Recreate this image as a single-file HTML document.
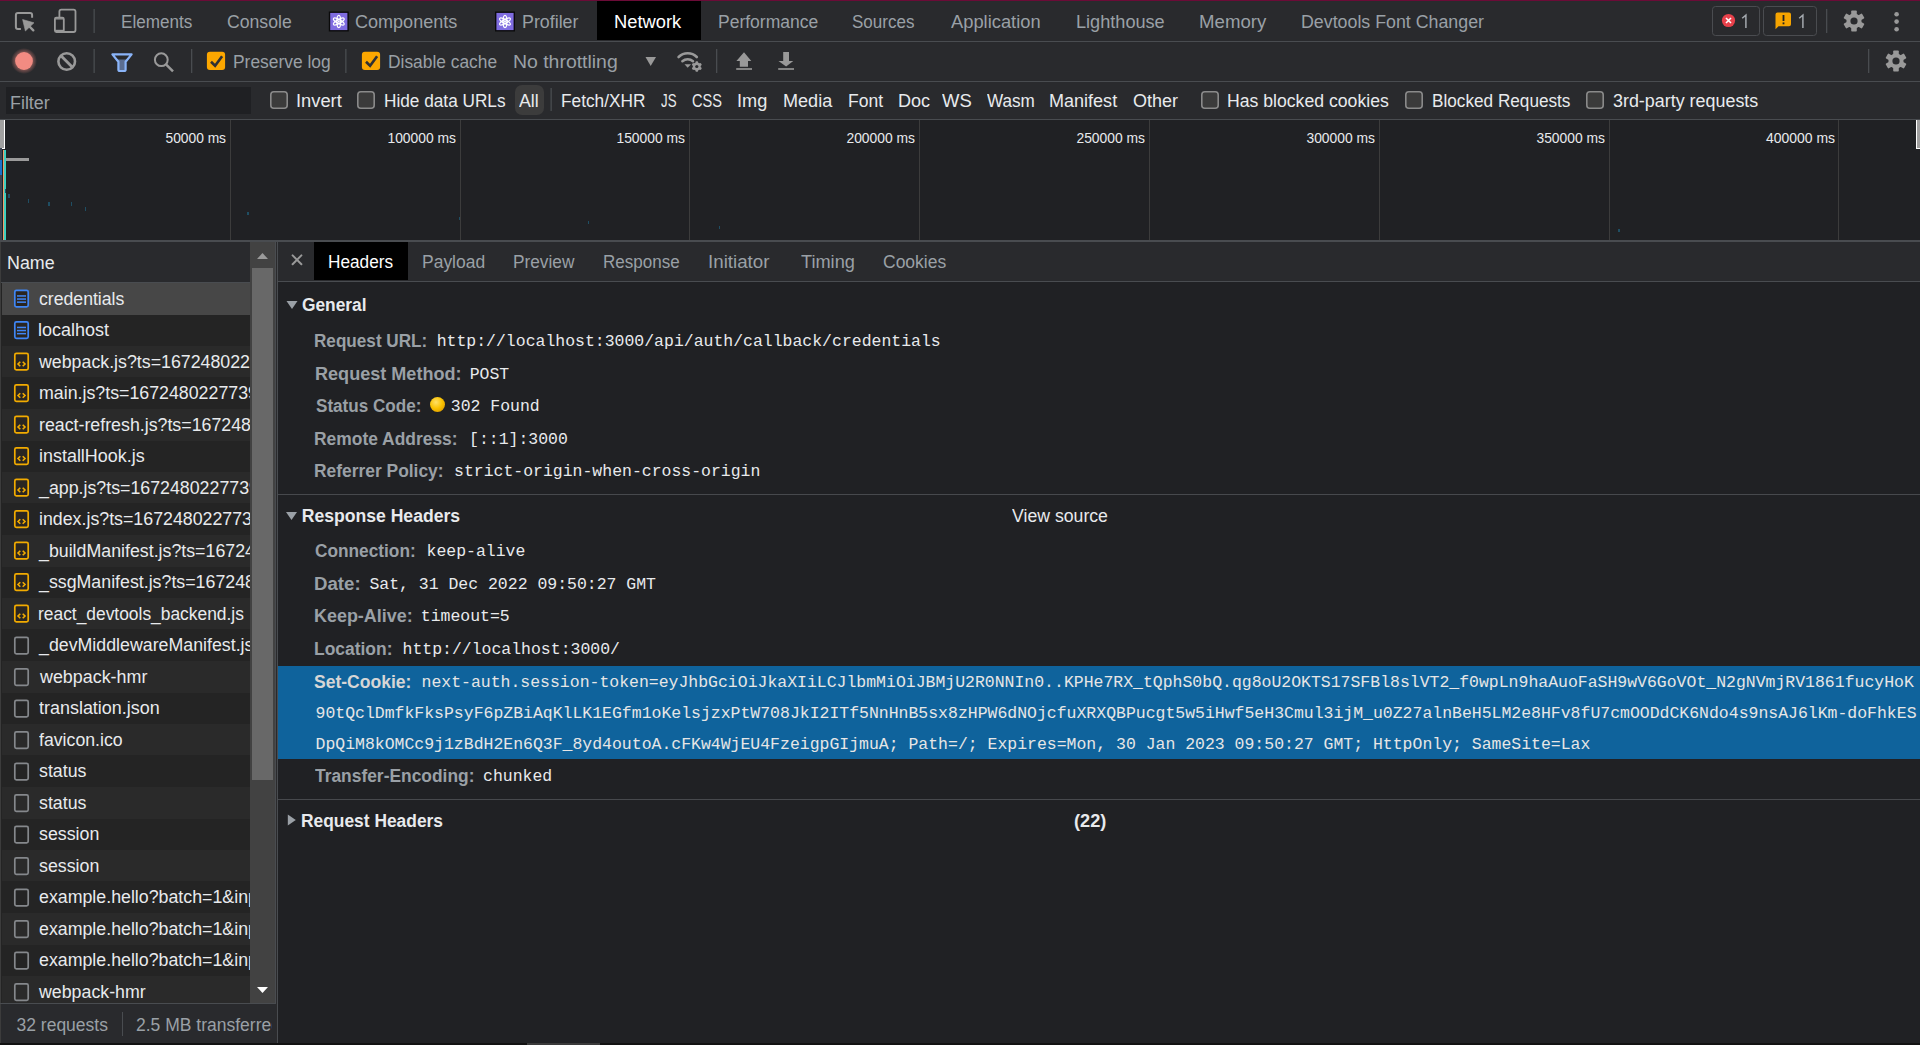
<!DOCTYPE html>
<html><head><meta charset="utf-8">
<style>
html,body{margin:0;padding:0;width:1920px;height:1045px;overflow:hidden;background:#202124;}
body{position:relative;font-family:"Liberation Sans",sans-serif;}
.a{position:absolute;}
.t{position:absolute;white-space:nowrap;line-height:1;}
.b{font-weight:700;}
.m{position:absolute;white-space:pre;line-height:1;font-family:"Liberation Mono",monospace;}
svg{position:absolute;left:0;top:0;overflow:visible;}
</style></head><body>
<div class="a" style="left:0px;top:0px;width:1920px;height:41px;background:#292a2d;"></div>
<div class="a" style="left:0px;top:0px;width:1920px;height:1px;background:#6b0b37;"></div>
<div class="a" style="left:0px;top:41px;width:1920px;height:1px;background:#494c50;"></div>
<div class="a" style="left:597px;top:1px;width:104px;height:39px;background:#000;"></div>
<div id="t_Elements_121_28" class="t" style="left:120.70px;top:14.19px;font-size:17.5px;color:#9aa0a6;transform:scaleX(0.9767);transform-origin:0 0;">Elements</div>
<div id="t_Console_227_28" class="t" style="left:226.50px;top:14.19px;font-size:17.5px;color:#9aa0a6;transform:scaleX(1.0083);transform-origin:0 0;">Console</div>
<div id="t_Components_356_28" class="t" style="left:355.00px;top:14.19px;font-size:17.5px;color:#9aa0a6;transform:scaleX(1.0306);transform-origin:0 0;">Components</div>
<div id="t_Profiler_523_28" class="t" style="left:522.00px;top:14.19px;font-size:17.5px;color:#9aa0a6;transform:scaleX(1.0188);transform-origin:0 0;">Profiler</div>
<div id="t_Performance_718_28" class="t" style="left:717.50px;top:14.19px;font-size:17.5px;color:#9aa0a6;transform:scaleX(1.0001);transform-origin:0 0;">Performance</div>
<div id="t_Sources_853_28" class="t" style="left:852.00px;top:14.19px;font-size:17.5px;color:#9aa0a6;transform:scaleX(0.9718);transform-origin:0 0;">Sources</div>
<div id="t_Application_951_28" class="t" style="left:951.00px;top:14.19px;font-size:17.5px;color:#9aa0a6;transform:scaleX(1.0471);transform-origin:0 0;">Application</div>
<div id="t_Lighthouse_1077_28" class="t" style="left:1076.00px;top:14.19px;font-size:17.5px;color:#9aa0a6;transform:scaleX(1.0357);transform-origin:0 0;">Lighthouse</div>
<div id="t_Memory_1200_28" class="t" style="left:1199.00px;top:14.19px;font-size:17.5px;color:#9aa0a6;transform:scaleX(1.0645);transform-origin:0 0;">Memory</div>
<div id="t_DevtoolsFontChan_1302_28" class="t" style="left:1301.00px;top:14.19px;font-size:17.5px;color:#9aa0a6;transform:scaleX(1.0168);transform-origin:0 0;">Devtools Font Changer</div>
<div id="t_Network_615_28" class="t" style="left:614.00px;top:14.19px;font-size:17.5px;color:#fff;transform:scaleX(1.0469);transform-origin:0 0;">Network</div>
<div class="a" style="left:0px;top:42px;width:1920px;height:39px;background:#292a2d;"></div>
<div class="a" style="left:0px;top:81px;width:1920px;height:1px;background:#494c50;"></div>
<div id="t_Preservelog_235_68" class="t" style="left:233.40px;top:54.19px;font-size:17.5px;color:#9aa0a6;transform:scaleX(0.9939);transform-origin:0 0;">Preserve log</div>
<div id="t_Disablecache_389_68" class="t" style="left:388.00px;top:54.19px;font-size:17.5px;color:#9aa0a6;transform:scaleX(0.9919);transform-origin:0 0;">Disable cache</div>
<div id="t_Nothrottling_514_68" class="t" style="left:513.00px;top:54.19px;font-size:17.5px;color:#9aa0a6;transform:scaleX(1.1099);transform-origin:0 0;">No throttling</div>
<div class="a" style="left:0px;top:82px;width:1920px;height:37px;background:#292a2d;"></div>
<div class="a" style="left:0px;top:119px;width:1920px;height:1px;background:#494c50;"></div>
<div class="a" style="left:6px;top:87px;width:245px;height:27px;background:#1f2023;"></div>
<div id="t_Filter_11_109" class="t" style="left:10.20px;top:95.19px;font-size:17.5px;color:#9aa0a6;transform:scaleX(1.0221);transform-origin:0 0;">Filter</div>
<div class="a" style="left:515px;top:85px;width:29px;height:30px;background:#3c3c3c;border-radius:7px;"></div>
<div id="t_Invert_297_107" class="t" style="left:296.00px;top:93.19px;font-size:17.5px;color:#e8eaed;transform:scaleX(1.0465);transform-origin:0 0;">Invert</div>
<div id="t_HidedataURLs_385_107" class="t" style="left:384.00px;top:93.19px;font-size:17.5px;color:#e8eaed;transform:scaleX(0.9840);transform-origin:0 0;">Hide data URLs</div>
<div id="t_All_519_107" class="t" style="left:519.30px;top:93.19px;font-size:17.5px;color:#e8eaed;transform:scaleX(1.0145);transform-origin:0 0;">All</div>
<div id="t_FetchXHR_562_107" class="t" style="left:561.00px;top:93.19px;font-size:17.5px;color:#e8eaed;transform:scaleX(0.9874);transform-origin:0 0;">Fetch/XHR</div>
<div id="t_JS_661_107" class="t" style="left:661.00px;top:93.19px;font-size:17.5px;color:#e8eaed;transform:scaleX(0.7591);transform-origin:0 0;">JS</div>
<div id="t_CSS_692_107" class="t" style="left:692.00px;top:93.19px;font-size:17.5px;color:#e8eaed;transform:scaleX(0.8333);transform-origin:0 0;">CSS</div>
<div id="t_Img_738_107" class="t" style="left:737.00px;top:93.19px;font-size:17.5px;color:#e8eaed;transform:scaleX(1.0357);transform-origin:0 0;">Img</div>
<div id="t_Media_784_107" class="t" style="left:783.00px;top:93.19px;font-size:17.5px;color:#e8eaed;transform:scaleX(1.0326);transform-origin:0 0;">Media</div>
<div id="t_Font_848_107" class="t" style="left:848.00px;top:93.19px;font-size:17.5px;color:#e8eaed;">Font</div>
<div id="t_Doc_899_107" class="t" style="left:898.00px;top:93.19px;font-size:17.5px;color:#e8eaed;transform:scaleX(1.0333);transform-origin:0 0;">Doc</div>
<div id="t_WS_942_107" class="t" style="left:942.00px;top:93.19px;font-size:17.5px;color:#e8eaed;transform:scaleX(1.0554);transform-origin:0 0;">WS</div>
<div id="t_Wasm_986_107" class="t" style="left:986.80px;top:93.19px;font-size:17.5px;color:#e8eaed;transform:scaleX(0.9781);transform-origin:0 0;">Wasm</div>
<div id="t_Manifest_1050_107" class="t" style="left:1049.00px;top:93.19px;font-size:17.5px;color:#e8eaed;transform:scaleX(1.0303);transform-origin:0 0;">Manifest</div>
<div id="t_Other_1133_107" class="t" style="left:1133.00px;top:93.19px;font-size:17.5px;color:#e8eaed;transform:scaleX(1.0290);transform-origin:0 0;">Other</div>
<div id="t_Hasblockedcookie_1228_107" class="t" style="left:1227.45px;top:93.19px;font-size:17.5px;color:#e8eaed;transform:scaleX(1.0079);transform-origin:0 0;">Has blocked cookies</div>
<div id="t_BlockedRequests_1433_107" class="t" style="left:1432.00px;top:93.19px;font-size:17.5px;color:#e8eaed;transform:scaleX(0.9815);transform-origin:0 0;">Blocked Requests</div>
<div id="t_3rdpartyrequests_1613_107" class="t" style="left:1613.45px;top:93.19px;font-size:17.5px;color:#e8eaed;transform:scaleX(1.0229);transform-origin:0 0;">3rd-party requests</div>
<div class="a" style="left:0px;top:120px;width:1920px;height:120px;background:#202124;"></div>
<div class="a" style="left:0px;top:240px;width:1920px;height:2px;background:#494c50;"></div>
<div class="a" style="left:230px;top:120px;width:1px;height:120px;background:#3c3c3c;"></div>
<div id="ov0" class="t" style="left:-74.20px;top:130.58px;font-size:14.2px;color:#e8eaed;transform:scaleX(0.9712);transform-origin:100% 0;width:300px;text-align:right;">50000 ms</div>
<div class="a" style="left:460px;top:120px;width:1px;height:120px;background:#3c3c3c;"></div>
<div id="ov1" class="t" style="left:156.10px;top:130.58px;font-size:14.2px;color:#e8eaed;transform:scaleX(0.9768);transform-origin:100% 0;width:300px;text-align:right;">100000 ms</div>
<div class="a" style="left:689px;top:120px;width:1px;height:120px;background:#3c3c3c;"></div>
<div id="ov2" class="t" style="left:385.10px;top:130.58px;font-size:14.2px;color:#e8eaed;transform:scaleX(0.9768);transform-origin:100% 0;width:300px;text-align:right;">150000 ms</div>
<div class="a" style="left:919px;top:120px;width:1px;height:120px;background:#3c3c3c;"></div>
<div id="ov3" class="t" style="left:615.10px;top:130.58px;font-size:14.2px;color:#e8eaed;transform:scaleX(0.9768);transform-origin:100% 0;width:300px;text-align:right;">200000 ms</div>
<div class="a" style="left:1149px;top:120px;width:1px;height:120px;background:#3c3c3c;"></div>
<div id="ov4" class="t" style="left:845.10px;top:130.58px;font-size:14.2px;color:#e8eaed;transform:scaleX(0.9768);transform-origin:100% 0;width:300px;text-align:right;">250000 ms</div>
<div class="a" style="left:1379px;top:120px;width:1px;height:120px;background:#3c3c3c;"></div>
<div id="ov5" class="t" style="left:1075.10px;top:130.58px;font-size:14.2px;color:#e8eaed;transform:scaleX(0.9768);transform-origin:100% 0;width:300px;text-align:right;">300000 ms</div>
<div class="a" style="left:1609px;top:120px;width:1px;height:120px;background:#3c3c3c;"></div>
<div id="ov6" class="t" style="left:1305.10px;top:130.58px;font-size:14.2px;color:#e8eaed;transform:scaleX(0.9768);transform-origin:100% 0;width:300px;text-align:right;">350000 ms</div>
<div class="a" style="left:1838px;top:120px;width:1px;height:120px;background:#3c3c3c;"></div>
<div id="ov7" class="t" style="left:1535.00px;top:130.58px;font-size:14.2px;color:#e8eaed;transform:scaleX(0.9833);transform-origin:100% 0;width:300px;text-align:right;">400000 ms</div>
<div class="a" style="left:0px;top:120px;width:4px;height:28px;background:#a0a0a0;border-right:1px solid #fff;border-bottom:1px solid #fff;"></div>
<div class="a" style="left:1916px;top:120px;width:4px;height:28px;background:#a0a0a0;border-left:1px solid #fff;border-bottom:1px solid #fff;"></div>
<div class="a" style="left:0px;top:148px;width:2px;height:92px;background:#3b4352;"></div>
<div class="a" style="left:0px;top:160px;width:2px;height:15px;background:#1a73c9;"></div>
<div class="a" style="left:3px;top:150px;width:1px;height:90px;background:#f29b6c;"></div>
<div class="a" style="left:4px;top:150px;width:2px;height:90px;background:#3ccfc0;"></div>
<div class="a" style="left:6px;top:158px;width:23px;height:3px;background:#9a9a9a;"></div>
<div class="a" style="left:5px;top:189px;width:1px;height:4px;background:#1f4e63;"></div>
<div class="a" style="left:8px;top:194px;width:2px;height:4px;background:#1f4e63;"></div>
<div class="a" style="left:28px;top:199px;width:1px;height:4px;background:#1f4e63;"></div>
<div class="a" style="left:48px;top:202px;width:2px;height:4px;background:#1f4e63;"></div>
<div class="a" style="left:71px;top:202px;width:1px;height:4px;background:#1f4e63;"></div>
<div class="a" style="left:85px;top:207px;width:1px;height:4px;background:#1f4e63;"></div>
<div class="a" style="left:247px;top:212px;width:2px;height:3px;background:#1f4e63;"></div>
<div class="a" style="left:459px;top:217px;width:1px;height:3px;background:#1f4e63;"></div>
<div class="a" style="left:588px;top:221px;width:1px;height:3px;background:#1f4e63;"></div>
<div class="a" style="left:719px;top:226px;width:1px;height:3px;background:#1f4e63;"></div>
<div class="a" style="left:1618px;top:229px;width:2px;height:3px;background:#1f4e63;"></div>
<div class="a" style="left:0px;top:242px;width:276px;height:801px;background:#242424;"></div>
<div class="a" style="left:0px;top:242px;width:275px;height:40px;background:#292a2d;"></div>
<div class="a" style="left:0px;top:282px;width:275px;height:1px;background:#494c50;"></div>
<div id="t_Name_8_269" class="t" style="left:7.20px;top:255.19px;font-size:17.5px;color:#e8eaed;transform:scaleX(1.0202);transform-origin:0 0;">Name</div>
<div class="a" style="left:0;top:283px;width:250px;height:720px;overflow:hidden;">
<div class="a" style="left:2px;top:0px;width:248px;height:32px;background:#474747;"></div>
<div id="row0" class="t" style="left:39.20px;top:7.79px;font-size:17.5px;color:#e8eaed;transform:scaleX(1.0084);transform-origin:0 0;">credentials</div>
<div class="a" style="left:2px;top:32px;width:248px;height:31px;background:#242424;"></div>
<div id="row1" class="t" style="left:38.20px;top:39.29px;font-size:17.5px;color:#e8eaed;transform:scaleX(1.0278);transform-origin:0 0;">localhost</div>
<div class="a" style="left:2px;top:63px;width:248px;height:31px;background:#2a2a2a;"></div>
<div id="row2" class="t" style="left:39.34px;top:70.79px;font-size:17.5px;color:#e8eaed;transform:scaleX(1.0158);transform-origin:0 0;">webpack.js?ts=167248022…</div>
<div class="a" style="left:2px;top:94px;width:248px;height:32px;background:#242424;"></div>
<div id="row3" class="t" style="left:39.34px;top:102.29px;font-size:17.5px;color:#e8eaed;transform:scaleX(1.0158);transform-origin:0 0;">main.js?ts=1672480227739</div>
<div class="a" style="left:2px;top:126px;width:248px;height:32px;background:#2a2a2a;"></div>
<div id="row4" class="t" style="left:39.34px;top:133.79px;font-size:17.5px;color:#e8eaed;transform:scaleX(1.0158);transform-origin:0 0;">react-refresh.js?ts=1672480227739</div>
<div class="a" style="left:2px;top:158px;width:248px;height:31px;background:#242424;"></div>
<div id="row5" class="t" style="left:38.60px;top:165.29px;font-size:17.5px;color:#e8eaed;transform:scaleX(1.0247);transform-origin:0 0;">installHook.js</div>
<div class="a" style="left:2px;top:189px;width:248px;height:31px;background:#2a2a2a;"></div>
<div id="row6" class="t" style="left:39.34px;top:196.79px;font-size:17.5px;color:#e8eaed;transform:scaleX(1.0158);transform-origin:0 0;">_app.js?ts=1672480227739</div>
<div class="a" style="left:2px;top:220px;width:248px;height:32px;background:#242424;"></div>
<div id="row7" class="t" style="left:39.34px;top:228.29px;font-size:17.5px;color:#e8eaed;transform:scaleX(1.0158);transform-origin:0 0;">index.js?ts=1672480227739</div>
<div class="a" style="left:2px;top:252px;width:248px;height:32px;background:#2a2a2a;"></div>
<div id="row8" class="t" style="left:39.34px;top:259.79px;font-size:17.5px;color:#e8eaed;transform:scaleX(1.0158);transform-origin:0 0;">_buildManifest.js?ts=1672480227739</div>
<div class="a" style="left:2px;top:284px;width:248px;height:31px;background:#242424;"></div>
<div id="row9" class="t" style="left:39.34px;top:291.29px;font-size:17.5px;color:#e8eaed;transform:scaleX(1.0158);transform-origin:0 0;">_ssgManifest.js?ts=1672480227739</div>
<div class="a" style="left:2px;top:315px;width:248px;height:31px;background:#2a2a2a;"></div>
<div id="row10" class="t" style="left:37.90px;top:322.79px;font-size:17.5px;color:#e8eaed;transform:scaleX(0.9937);transform-origin:0 0;">react_devtools_backend.js</div>
<div class="a" style="left:2px;top:346px;width:248px;height:32px;background:#242424;"></div>
<div id="row11" class="t" style="left:39.34px;top:354.29px;font-size:17.5px;color:#e8eaed;transform:scaleX(1.0158);transform-origin:0 0;">_devMiddlewareManifest.json</div>
<div class="a" style="left:2px;top:378px;width:248px;height:32px;background:#2a2a2a;"></div>
<div id="row12" class="t" style="left:39.90px;top:385.79px;font-size:17.5px;color:#e8eaed;transform:scaleX(1.0219);transform-origin:0 0;">webpack-hmr</div>
<div class="a" style="left:2px;top:410px;width:248px;height:31px;background:#242424;"></div>
<div id="row13" class="t" style="left:38.90px;top:417.29px;font-size:17.5px;color:#e8eaed;transform:scaleX(1.0256);transform-origin:0 0;">translation.json</div>
<div class="a" style="left:2px;top:441px;width:248px;height:31px;background:#2a2a2a;"></div>
<div id="row14" class="t" style="left:38.90px;top:448.79px;font-size:17.5px;color:#e8eaed;transform:scaleX(1.0110);transform-origin:0 0;">favicon.ico</div>
<div class="a" style="left:2px;top:472px;width:248px;height:32px;background:#242424;"></div>
<div id="row15" class="t" style="left:39.34px;top:480.29px;font-size:17.5px;color:#e8eaed;transform:scaleX(1.0158);transform-origin:0 0;">status</div>
<div class="a" style="left:2px;top:504px;width:248px;height:32px;background:#2a2a2a;"></div>
<div id="row16" class="t" style="left:39.34px;top:511.79px;font-size:17.5px;color:#e8eaed;transform:scaleX(1.0158);transform-origin:0 0;">status</div>
<div class="a" style="left:2px;top:536px;width:248px;height:31px;background:#242424;"></div>
<div id="row17" class="t" style="left:39.34px;top:543.29px;font-size:17.5px;color:#e8eaed;transform:scaleX(1.0158);transform-origin:0 0;">session</div>
<div class="a" style="left:2px;top:567px;width:248px;height:31px;background:#2a2a2a;"></div>
<div id="row18" class="t" style="left:39.34px;top:574.79px;font-size:17.5px;color:#e8eaed;transform:scaleX(1.0158);transform-origin:0 0;">session</div>
<div class="a" style="left:2px;top:598px;width:248px;height:32px;background:#242424;"></div>
<div id="row19" class="t" style="left:39.34px;top:606.29px;font-size:17.5px;color:#e8eaed;transform:scaleX(1.0158);transform-origin:0 0;">example.hello?batch=1&amp;input=%7B%7D</div>
<div class="a" style="left:2px;top:630px;width:248px;height:32px;background:#2a2a2a;"></div>
<div id="row20" class="t" style="left:39.34px;top:637.79px;font-size:17.5px;color:#e8eaed;transform:scaleX(1.0158);transform-origin:0 0;">example.hello?batch=1&amp;input=%7B%7D</div>
<div class="a" style="left:2px;top:662px;width:248px;height:31px;background:#242424;"></div>
<div id="row21" class="t" style="left:39.34px;top:669.29px;font-size:17.5px;color:#e8eaed;transform:scaleX(1.0158);transform-origin:0 0;">example.hello?batch=1&amp;input=%7B%7D</div>
<div class="a" style="left:2px;top:693px;width:248px;height:31px;background:#2a2a2a;"></div>
<div id="row22" class="t" style="left:39.34px;top:700.79px;font-size:17.5px;color:#e8eaed;transform:scaleX(1.0158);transform-origin:0 0;">webpack-hmr</div>
</div>
<div class="a" style="left:250px;top:242px;width:25px;height:761px;background:#424242;"></div>
<div class="a" style="left:252px;top:268px;width:21px;height:512px;background:#686868;"></div>
<div class="a" style="left:0px;top:242px;width:1px;height:801px;background:#3c3c3c;"></div>
<div class="a" style="left:275px;top:242px;width:1px;height:801px;background:#494c50;"></div>
<div class="a" style="left:276px;top:242px;width:1px;height:801px;background:#2a2a2c;"></div>
<div class="a" style="left:277px;top:242px;width:1px;height:801px;background:#494c50;"></div>
<div class="a" style="left:0px;top:1003px;width:276px;height:1px;background:#494c50;"></div>
<div class="a" style="left:1px;top:1004px;width:275px;height:39px;background:#292a2d;"></div>
<div id="t_32requests_16_1031" class="t" style="left:16.50px;top:1017.19px;font-size:17.5px;color:#9aa0a6;">32 requests</div>
<div class="a" style="left:122px;top:1012px;width:1px;height:24px;background:#494c50;"></div>
<div class="a" style="left:130px;top:1004px;width:142px;height:39px;overflow:hidden;"><div id="mbt" class="t" style="left:6.00px;top:13.19px;font-size:17.5px;color:#9aa0a6;">2.5 MB transferred</div>
</div>
<div class="a" style="left:0px;top:1043px;width:1920px;height:2px;background:#121212;"></div>
<div class="a" style="left:527px;top:1043px;width:73px;height:2px;background:#3a3a3a;"></div>
<div class="a" style="left:278px;top:242px;width:1642px;height:801px;background:#202124;"></div>
<div class="a" style="left:278px;top:242px;width:1642px;height:39px;background:#292a2d;"></div>
<div class="a" style="left:278px;top:281px;width:1642px;height:1px;background:#494c50;"></div>
<div class="a" style="left:314px;top:242px;width:94px;height:38px;background:#000;"></div>
<div id="t_Headers_329_268" class="t" style="left:328.00px;top:254.19px;font-size:17.5px;color:#fff;transform:scaleX(0.9846);transform-origin:0 0;">Headers</div>
<div id="t_Payload_422_268" class="t" style="left:421.80px;top:254.19px;font-size:17.5px;color:#9aa0a6;transform:scaleX(0.9987);transform-origin:0 0;">Payload</div>
<div id="t_Preview_514_268" class="t" style="left:513.20px;top:254.19px;font-size:17.5px;color:#9aa0a6;transform:scaleX(0.9859);transform-origin:0 0;">Preview</div>
<div id="t_Response_604_268" class="t" style="left:603.00px;top:254.19px;font-size:17.5px;color:#9aa0a6;transform:scaleX(0.9730);transform-origin:0 0;">Response</div>
<div id="t_Initiator_709_268" class="t" style="left:708.00px;top:254.19px;font-size:17.5px;color:#9aa0a6;transform:scaleX(1.0717);transform-origin:0 0;">Initiator</div>
<div id="t_Timing_801_268" class="t" style="left:801.00px;top:254.19px;font-size:17.5px;color:#9aa0a6;transform:scaleX(1.0392);transform-origin:0 0;">Timing</div>
<div id="t_Cookies_884_268" class="t" style="left:883.00px;top:254.19px;font-size:17.5px;color:#9aa0a6;">Cookies</div>
<div id="t_General_302_311" class="t b" style="left:302.00px;top:296.80px;font-size:17.6px;color:#e8eaed;transform:scaleX(0.9851);transform-origin:0 0;">General</div>
<div id="t_RequestURL_315_347" class="t b" style="left:314.40px;top:332.80px;font-size:17.6px;color:#9aa0a6;transform:scaleX(0.9737);transform-origin:0 0;">Request URL:</div>
<div id="t_httplocalhost300_436_347" class="m" style="left:436.70px;top:333.97px;font-size:16.48px;color:#e8eaed;">http://localhost:3000/api/auth/callback/credentials</div>
<div id="t_RequestMethod_315_380" class="t b" style="left:314.50px;top:365.80px;font-size:17.6px;color:#9aa0a6;transform:scaleX(1.0270);transform-origin:0 0;">Request Method:</div>
<div id="t_POST_469_380" class="m" style="left:469.70px;top:366.97px;font-size:16.48px;color:#e8eaed;">POST</div>
<div id="t_StatusCode_315_412" class="t b" style="left:315.50px;top:397.80px;font-size:17.6px;color:#9aa0a6;transform:scaleX(0.9720);transform-origin:0 0;">Status Code:</div>
<div id="t_302Found_450_412" class="m" style="left:450.80px;top:398.97px;font-size:16.48px;color:#e8eaed;">302 Found</div>
<div id="t_RemoteAddress_315_445" class="t b" style="left:314.00px;top:430.80px;font-size:17.6px;color:#9aa0a6;transform:scaleX(0.9900);transform-origin:0 0;">Remote Address:</div>
<div id="t_13000_469_445" class="m" style="left:469.00px;top:431.97px;font-size:16.48px;color:#e8eaed;">[::1]:3000</div>
<div id="t_ReferrerPolicy_315_477" class="t b" style="left:314.00px;top:462.80px;font-size:17.6px;color:#9aa0a6;transform:scaleX(0.9889);transform-origin:0 0;">Referrer Policy:</div>
<div id="t_strictoriginwhen_454_477" class="m" style="left:454.00px;top:463.97px;font-size:16.48px;color:#e8eaed;">strict-origin-when-cross-origin</div>
<div class="a" style="left:278px;top:494px;width:1642px;height:1px;background:#47494d;"></div>
<div id="t_ResponseHeaders_301_522" class="t b" style="left:301.70px;top:507.80px;font-size:17.6px;color:#e8eaed;">Response Headers</div>
<div id="t_Viewsource_1011_522" class="t" style="left:1011.80px;top:508.19px;font-size:17.5px;color:#e8eaed;transform:scaleX(1.0097);transform-origin:0 0;">View source</div>
<div id="t_Connection_315_557" class="t b" style="left:315.30px;top:543.30px;font-size:17.6px;color:#9aa0a6;transform:scaleX(0.9814);transform-origin:0 0;">Connection:</div>
<div id="t_keepalive_426_557" class="m" style="left:426.50px;top:544.47px;font-size:16.48px;color:#e8eaed;">keep-alive</div>
<div id="t_Date_315_590" class="t b" style="left:314.30px;top:575.80px;font-size:17.6px;color:#9aa0a6;transform:scaleX(1.0596);transform-origin:0 0;">Date:</div>
<div id="t_Sat31Dec20220950_369_590" class="m" style="left:369.40px;top:576.97px;font-size:16.48px;color:#e8eaed;">Sat, 31 Dec 2022 09:50:27 GMT</div>
<div id="t_KeepAlive_315_622" class="t b" style="left:314.30px;top:608.30px;font-size:17.6px;color:#9aa0a6;transform:scaleX(1.0194);transform-origin:0 0;">Keep-Alive:</div>
<div id="t_timeout5_420_622" class="m" style="left:420.80px;top:609.47px;font-size:16.48px;color:#e8eaed;">timeout=5</div>
<div id="t_Location_315_655" class="t b" style="left:314.30px;top:640.80px;font-size:17.6px;color:#9aa0a6;transform:scaleX(0.9913);transform-origin:0 0;">Location:</div>
<div id="t_httplocalhost300_402_655" class="m" style="left:402.50px;top:641.97px;font-size:16.48px;color:#e8eaed;">http://localhost:3000/</div>
<div class="a" style="left:278px;top:666px;width:1642px;height:93px;background:#0f639c;"></div>
<div id="t_SetCookie_315_688" class="t b" style="left:314.30px;top:673.80px;font-size:17.6px;color:#d6d6d6;transform:scaleX(0.9966);transform-origin:0 0;">Set-Cookie:</div>
<div id="t_nextauthsessiont_421_688" class="m" style="left:421.50px;top:674.97px;font-size:16.48px;color:#e6e6e6;">next-auth.session-token=eyJhbGciOiJkaXIiLCJlbmMiOiJBMjU2R0NNIn0..KPHe7RX_tQphS0bQ.qg8oU2OKTS17SFBl8slVT2_f0wpLn9haAuoFaSH9wV6GoVOt_N2gNVmjRV1861fucyHoK</div>
<div id="t_90tQclDmfkFksPsy_315_719" class="m" style="left:315.50px;top:705.97px;font-size:16.48px;color:#e6e6e6;">90tQclDmfkFksPsyF6pZBiAqKlLK1EGfm1oKelsjzxPtW708JkI2ITf5NnHnB5sx8zHPW6dNOjcfuXRXQBPucgt5w5iHwf5eH3Cmul3ijM_u0Z27alnBeH5LM2e8HFv8fU7cmOODdCK6Ndo4s9nsAJ6lKm-doFhkES</div>
<div id="t_DpQiM8kOMCc9j1zB_315_750" class="m" style="left:315.50px;top:736.97px;font-size:16.48px;color:#e6e6e6;">DpQiM8kOMCc9j1zBdH2En6Q3F_8yd4outoA.cFKw4WjEU4FzeigpGIjmuA; Path=/; Expires=Mon, 30 Jan 2023 09:50:27 GMT; HttpOnly; SameSite=Lax</div>
<div id="t_TransferEncoding_315_782" class="t b" style="left:314.50px;top:767.80px;font-size:17.6px;color:#9aa0a6;transform:scaleX(0.9885);transform-origin:0 0;">Transfer-Encoding:</div>
<div id="t_chunked_483_782" class="m" style="left:483.00px;top:768.97px;font-size:16.48px;color:#e8eaed;">chunked</div>
<div class="a" style="left:278px;top:799px;width:1642px;height:1px;background:#47494d;"></div>
<div id="t_RequestHeaders_301_827" class="t b" style="left:300.50px;top:812.80px;font-size:17.6px;color:#e8eaed;transform:scaleX(0.9879);transform-origin:0 0;">Request Headers</div>
<div id="t_22_1073_827" class="t b" style="left:1074.30px;top:812.80px;font-size:17.6px;color:#e8eaed;transform:scaleX(1.0343);transform-origin:0 0;">(22)</div>
<svg width="1920" height="1045" viewBox="0 0 1920 1045">
<path d="M20.9,29 H17.9 Q15.9,29 15.9,27 V14.9 Q15.9,12.9 17.9,12.9 H30.1 Q32.1,12.9 32.1,14.9 V17.8" fill="none" stroke="#999999" stroke-width="2"/>
<path d="M22.6,19.5 L34,22.8 L25.4,31 Z" fill="#999999" stroke="#999999" stroke-width="0.6" stroke-linejoin="round"/>
<path d="M28.5,25.5 L33.3,30.3" stroke="#999999" stroke-width="2.4" stroke-linecap="round"/>
<rect x="59.4" y="9.6" width="16.1" height="22.4" rx="2" fill="none" stroke="#999999" stroke-width="1.8"/>
<rect x="54.9" y="17.6" width="8.9" height="14.4" rx="1.5" fill="#292a2d" stroke="#999999" stroke-width="1.8"/>
<rect x="55" y="18.2" width="8.7" height="1.3" fill="#999999"/><rect x="55" y="29.8" width="8.7" height="1.6" fill="#999999"/>
<rect x="93.5" y="9" width="1.3" height="24" fill="#494c50"/>
<rect x="328.8" y="11.5" width="20" height="20" fill="#0a0a0a"/><rect x="330.2" y="12.9" width="17.2" height="17.2" fill="#7f6ce0"/><ellipse cx="338.8" cy="21.5" rx="1.9" ry="6.1" fill="none" stroke="#fff" stroke-width="1.25" transform="rotate(0 338.8 21.5)"/><ellipse cx="338.8" cy="21.5" rx="1.9" ry="6.1" fill="none" stroke="#fff" stroke-width="1.25" transform="rotate(60 338.8 21.5)"/><ellipse cx="338.8" cy="21.5" rx="1.9" ry="6.1" fill="none" stroke="#fff" stroke-width="1.25" transform="rotate(120 338.8 21.5)"/><circle cx="338.8" cy="21.5" r="1.0" fill="#fff"/>
<rect x="495" y="11.5" width="20" height="20" fill="#0a0a0a"/><rect x="496.4" y="12.9" width="17.2" height="17.2" fill="#7f6ce0"/><ellipse cx="505" cy="21.5" rx="1.9" ry="6.1" fill="none" stroke="#fff" stroke-width="1.25" transform="rotate(0 505 21.5)"/><ellipse cx="505" cy="21.5" rx="1.9" ry="6.1" fill="none" stroke="#fff" stroke-width="1.25" transform="rotate(60 505 21.5)"/><ellipse cx="505" cy="21.5" rx="1.9" ry="6.1" fill="none" stroke="#fff" stroke-width="1.25" transform="rotate(120 505 21.5)"/><circle cx="505" cy="21.5" r="1.0" fill="#fff"/>
<rect x="1712.5" y="6.5" width="47" height="29" rx="3" fill="none" stroke="#4a4c50" stroke-width="1"/>
<rect x="1763.5" y="6.5" width="53" height="29" rx="3" fill="none" stroke="#4a4c50" stroke-width="1"/>
<circle cx="1728.5" cy="20.5" r="6.6" fill="#e8414b"/>
<path d="M1726,18 L1731,23 M1731,18 L1726,23" stroke="#fff" stroke-width="1.6"/>
<path d="M1775.5,14.5 Q1775.5,12.5 1777.5,12.5 H1789 Q1791,12.5 1791,14.5 V24.2 Q1791,26.2 1789,26.2 H1778.5 L1775.5,29.3 Z" fill="#f6a400"/>
<rect x="1782.6" y="15" width="1.8" height="6" fill="#222"/><rect x="1782.6" y="22.4" width="1.8" height="1.9" fill="#222"/>
<path d="M1742.2,18.3 L1745.9,15.1 V28" fill="none" stroke="#a3a8ae" stroke-width="1.5"/>
<path d="M1799.2,18.3 L1802.9,15.1 V28" fill="none" stroke="#a3a8ae" stroke-width="1.5"/>
<rect x="1826" y="9" width="1.3" height="24" fill="#494c50"/>
<circle cx="1854" cy="21" r="7.6" fill="#999999"/><rect x="1851.2" y="10.4" width="5.6" height="21.2" rx="0.8" fill="#999999" transform="rotate(0 1854 21)"/><rect x="1851.2" y="10.4" width="5.6" height="21.2" rx="0.8" fill="#999999" transform="rotate(60 1854 21)"/><rect x="1851.2" y="10.4" width="5.6" height="21.2" rx="0.8" fill="#999999" transform="rotate(120 1854 21)"/><circle cx="1854" cy="21" r="3.6" fill="#292a2d"/>
<circle cx="1896.6" cy="14.2" r="2.3" fill="#999999"/>
<circle cx="1896.6" cy="21.6" r="2.3" fill="#999999"/>
<circle cx="1896.6" cy="29.2" r="2.3" fill="#999999"/>
<defs><radialGradient id="glow"><stop offset="0.6" stop-color="#f28b82" stop-opacity="0.5"/><stop offset="1" stop-color="#f28b82" stop-opacity="0"/></radialGradient><radialGradient id="yd" cx="0.4" cy="0.35" r="0.7"><stop offset="0" stop-color="#ffe066"/><stop offset="0.6" stop-color="#f9c200"/><stop offset="1" stop-color="#e0a000"/></radialGradient></defs>
<circle cx="24" cy="61" r="13" fill="url(#glow)"/>
<circle cx="24" cy="61" r="8.9" fill="#f28b82"/>
<circle cx="66.7" cy="61.5" r="8.3" fill="none" stroke="#999999" stroke-width="2.6"/>
<path d="M61.2,56 L72.2,67" stroke="#999999" stroke-width="2.8"/>
<rect x="93.5" y="49" width="1.3" height="24" fill="#494c50"/>
<path d="M115.6,59.6 H128.4 L125.6,62.6 V70 H118.4 V62.6 Z" fill="#5b6e92"/>
<path d="M112.4,54.4 H131.6 L125.6,61.8 V69.4 Q125.6,71 124,71 H120 Q118.4,71 118.4,69.4 V61.8 Z" fill="none" stroke="#8ab4f8" stroke-width="2.2" stroke-linejoin="round"/>
<circle cx="161.3" cy="59.7" r="6.4" fill="none" stroke="#999999" stroke-width="2"/>
<path d="M166,64.4 L173,71.4" stroke="#999999" stroke-width="2.4"/>
<rect x="191" y="49" width="1.3" height="24" fill="#494c50"/>
<rect x="206.9" y="51.7" width="18.2" height="18.4" rx="3" fill="#fca700"/><path d="M211.0,61.7 L215.1,65.7 L222.1,56.2" fill="none" stroke="#2f3033" stroke-width="2.6"/>
<rect x="345.2" y="49" width="1.3" height="24" fill="#494c50"/>
<rect x="361.9" y="51.7" width="18.2" height="18.4" rx="3" fill="#fca700"/><path d="M366.0,61.7 L370.09999999999997,65.7 L377.09999999999997,56.2" fill="none" stroke="#2f3033" stroke-width="2.6"/>
<path d="M645.5,57 H656 L650.7,66 Z" fill="#999999"/>
<path d="M678.6,57 A13,13 0 0 1 696.8,57" fill="none" stroke="#999999" stroke-width="2.6" stroke-linecap="round"/>
<path d="M682.4,61.2 A8,8 0 0 1 693,61.2" fill="none" stroke="#999999" stroke-width="2.6" stroke-linecap="round"/>
<path d="M684.5,64.3 L691,64.3 L687.7,67.8 Z" fill="#999999"/>
<circle cx="696.8" cy="66.5" r="3.9" fill="#999999"/><rect x="695.5" y="61.3" width="2.6" height="10.4" rx="0.8" fill="#999999" transform="rotate(0 696.8 66.5)"/><rect x="695.5" y="61.3" width="2.6" height="10.4" rx="0.8" fill="#999999" transform="rotate(60 696.8 66.5)"/><rect x="695.5" y="61.3" width="2.6" height="10.4" rx="0.8" fill="#999999" transform="rotate(120 696.8 66.5)"/><circle cx="696.8" cy="66.5" r="1.6" fill="#292a2d"/>
<rect x="716" y="49" width="1.3" height="24" fill="#494c50"/>
<path d="M744,52.2 L751.3,61 H748 V66.8 H739.8 V61 H736.4 Z" fill="#999999"/><rect x="736.2" y="68.2" width="15.8" height="1.6" fill="#999999"/>
<path d="M783.2,52 H789 V61 H793.3 L786.1,66.6 L778.5,61 H783.2 Z" fill="#999999"/><rect x="778.2" y="68.2" width="15.8" height="1.6" fill="#999999"/>
<rect x="1868" y="49" width="1.3" height="24" fill="#494c50"/>
<circle cx="1896" cy="61" r="7.6" fill="#999999"/><rect x="1893.2" y="50.4" width="5.6" height="21.2" rx="0.8" fill="#999999" transform="rotate(0 1896 61)"/><rect x="1893.2" y="50.4" width="5.6" height="21.2" rx="0.8" fill="#999999" transform="rotate(60 1896 61)"/><rect x="1893.2" y="50.4" width="5.6" height="21.2" rx="0.8" fill="#999999" transform="rotate(120 1896 61)"/><circle cx="1896" cy="61" r="3.6" fill="#292a2d"/>
<rect x="270.8" y="91.8" width="16.4" height="16.4" rx="3" fill="#3b3b3b" stroke="#8a8a8a" stroke-width="1.6"/>
<rect x="357.8" y="91.8" width="16.4" height="16.4" rx="3" fill="#3b3b3b" stroke="#8a8a8a" stroke-width="1.6"/>
<rect x="1201.8" y="91.8" width="16.4" height="16.4" rx="3" fill="#3b3b3b" stroke="#8a8a8a" stroke-width="1.6"/>
<rect x="1405.8" y="91.8" width="16.4" height="16.4" rx="3" fill="#3b3b3b" stroke="#8a8a8a" stroke-width="1.6"/>
<rect x="1586.8" y="91.8" width="16.4" height="16.4" rx="3" fill="#3b3b3b" stroke="#8a8a8a" stroke-width="1.6"/>
<rect x="550.5" y="88" width="1.3" height="23" fill="#494c50"/>
<rect x="14.8" y="290.30" width="13.4" height="16.6" rx="1.6" fill="#2a2520" stroke="#3f86f5" stroke-width="1.7"/>
<rect x="17" y="295.20" width="9" height="1.5" fill="#3f86f5"/>
<rect x="17" y="298.30" width="9" height="1.5" fill="#3f86f5"/>
<rect x="17" y="301.40" width="9" height="1.5" fill="#3f86f5"/>
<rect x="14.8" y="321.80" width="13.4" height="16.6" rx="1.6" fill="#2a2520" stroke="#3f86f5" stroke-width="1.7"/>
<rect x="17" y="326.70" width="9" height="1.5" fill="#3f86f5"/>
<rect x="17" y="329.80" width="9" height="1.5" fill="#3f86f5"/>
<rect x="17" y="332.90" width="9" height="1.5" fill="#3f86f5"/>
<rect x="14.8" y="353.30" width="13.4" height="16.6" rx="1.6" fill="#2a2622" stroke="#f2ab00" stroke-width="1.7"/>
<path d="M20.3,361.70 L18,364.00 L20.3,366.30 M22.7,361.70 L25,364.00 L22.7,366.30" fill="none" stroke="#f2ab00" stroke-width="1.6"/>
<rect x="14.8" y="384.80" width="13.4" height="16.6" rx="1.6" fill="#2a2622" stroke="#f2ab00" stroke-width="1.7"/>
<path d="M20.3,393.20 L18,395.50 L20.3,397.80 M22.7,393.20 L25,395.50 L22.7,397.80" fill="none" stroke="#f2ab00" stroke-width="1.6"/>
<rect x="14.8" y="416.30" width="13.4" height="16.6" rx="1.6" fill="#2a2622" stroke="#f2ab00" stroke-width="1.7"/>
<path d="M20.3,424.70 L18,427.00 L20.3,429.30 M22.7,424.70 L25,427.00 L22.7,429.30" fill="none" stroke="#f2ab00" stroke-width="1.6"/>
<rect x="14.8" y="447.80" width="13.4" height="16.6" rx="1.6" fill="#2a2622" stroke="#f2ab00" stroke-width="1.7"/>
<path d="M20.3,456.20 L18,458.50 L20.3,460.80 M22.7,456.20 L25,458.50 L22.7,460.80" fill="none" stroke="#f2ab00" stroke-width="1.6"/>
<rect x="14.8" y="479.30" width="13.4" height="16.6" rx="1.6" fill="#2a2622" stroke="#f2ab00" stroke-width="1.7"/>
<path d="M20.3,487.70 L18,490.00 L20.3,492.30 M22.7,487.70 L25,490.00 L22.7,492.30" fill="none" stroke="#f2ab00" stroke-width="1.6"/>
<rect x="14.8" y="510.80" width="13.4" height="16.6" rx="1.6" fill="#2a2622" stroke="#f2ab00" stroke-width="1.7"/>
<path d="M20.3,519.20 L18,521.50 L20.3,523.80 M22.7,519.20 L25,521.50 L22.7,523.80" fill="none" stroke="#f2ab00" stroke-width="1.6"/>
<rect x="14.8" y="542.30" width="13.4" height="16.6" rx="1.6" fill="#2a2622" stroke="#f2ab00" stroke-width="1.7"/>
<path d="M20.3,550.70 L18,553.00 L20.3,555.30 M22.7,550.70 L25,553.00 L22.7,555.30" fill="none" stroke="#f2ab00" stroke-width="1.6"/>
<rect x="14.8" y="573.80" width="13.4" height="16.6" rx="1.6" fill="#2a2622" stroke="#f2ab00" stroke-width="1.7"/>
<path d="M20.3,582.20 L18,584.50 L20.3,586.80 M22.7,582.20 L25,584.50 L22.7,586.80" fill="none" stroke="#f2ab00" stroke-width="1.6"/>
<rect x="14.8" y="605.30" width="13.4" height="16.6" rx="1.6" fill="#2a2622" stroke="#f2ab00" stroke-width="1.7"/>
<path d="M20.3,613.70 L18,616.00 L20.3,618.30 M22.7,613.70 L25,616.00 L22.7,618.30" fill="none" stroke="#f2ab00" stroke-width="1.6"/>
<rect x="14.8" y="637.30" width="13.4" height="16.6" rx="1.6" fill="none" stroke="#85888c" stroke-width="1.7"/>
<rect x="14.8" y="668.80" width="13.4" height="16.6" rx="1.6" fill="none" stroke="#85888c" stroke-width="1.7"/>
<rect x="14.8" y="700.30" width="13.4" height="16.6" rx="1.6" fill="none" stroke="#85888c" stroke-width="1.7"/>
<rect x="14.8" y="731.80" width="13.4" height="16.6" rx="1.6" fill="none" stroke="#85888c" stroke-width="1.7"/>
<rect x="14.8" y="763.30" width="13.4" height="16.6" rx="1.6" fill="none" stroke="#85888c" stroke-width="1.7"/>
<rect x="14.8" y="794.80" width="13.4" height="16.6" rx="1.6" fill="none" stroke="#85888c" stroke-width="1.7"/>
<rect x="14.8" y="826.30" width="13.4" height="16.6" rx="1.6" fill="none" stroke="#85888c" stroke-width="1.7"/>
<rect x="14.8" y="857.80" width="13.4" height="16.6" rx="1.6" fill="none" stroke="#85888c" stroke-width="1.7"/>
<rect x="14.8" y="889.30" width="13.4" height="16.6" rx="1.6" fill="none" stroke="#85888c" stroke-width="1.7"/>
<rect x="14.8" y="920.80" width="13.4" height="16.6" rx="1.6" fill="none" stroke="#85888c" stroke-width="1.7"/>
<rect x="14.8" y="952.30" width="13.4" height="16.6" rx="1.6" fill="none" stroke="#85888c" stroke-width="1.7"/>
<rect x="14.8" y="983.80" width="13.4" height="16.6" rx="1.6" fill="none" stroke="#85888c" stroke-width="1.7"/>
<path d="M257,259 H268 L262.5,253 Z" fill="#9a9a9a"/>
<path d="M257,987 H268 L262.5,993 Z" fill="#ffffff"/>
<path d="M292.6,255.4 L301.4,264.2 M301.4,255.4 L292.6,264.2" stroke="#999999" stroke-width="2" stroke-linecap="round"/>
<path d="M286.5,301 H297.5 L292,309 Z" fill="#9aa0a6"/>
<path d="M286,512 H297 L291.5,520 Z" fill="#9aa0a6"/>
<path d="M287.8,814.6 V825.5 L295.8,820 Z" fill="#9aa0a6"/>
<circle cx="437.5" cy="404.5" r="7.5" fill="url(#yd)"/>
</svg>
</body></html>
